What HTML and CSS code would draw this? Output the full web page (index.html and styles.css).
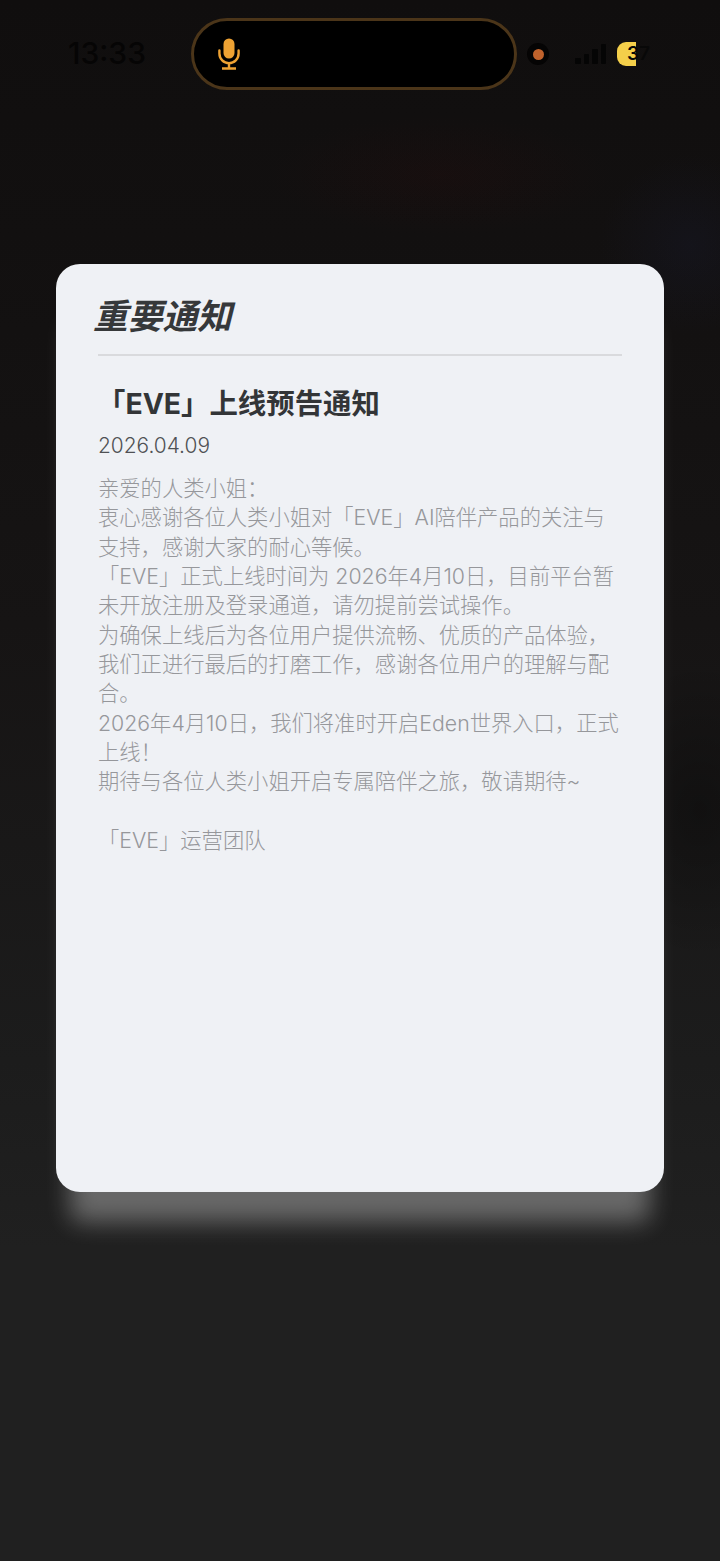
FILE: index.html
```html
<!DOCTYPE html>
<html lang="zh-CN">
<head>
<meta charset="utf-8">
<title>重要通知</title>
<link rel="stylesheet" href="styles.css">
</head>
<body>
<div class="screen">
  <header class="status">
    <span class="time">13:33</span>
    <div class="island">
      <svg class="mic" width="24" height="32" viewBox="0 0 24 32" fill="none">
        <rect x="6.5" y="0.5" width="11" height="20" rx="5.5" fill="#eea233"/>
        <path d="M2.4 12.5v3a9.6 9.6 0 0 0 19.2 0v-3" stroke="#eea233" stroke-width="2.4" stroke-linecap="round"/>
        <path d="M12 25v5M5 30.5h14" stroke="#eea233" stroke-width="2.4"/>
      </svg>
    </div>
    <span class="record"><i></i></span>
    <div class="signal"><i></i><i></i><i></i><i></i></div>
    <div class="battery"><b class="fill"></b><span class="level">37</span></div>
  </header>
  <main class="card">
    <h1 class="heading">重要通知</h1>
    <h2 class="title">「EVE」上线预告通知</h2>
    <p class="date">2026.04.09</p>
    <div class="body">
      <p>亲爱的人类小姐：</p>
      <p>衷心感谢各位人类小姐对「EVE」AI陪伴产品的关注与支持，感谢大家的耐心等候。</p>
      <p>「EVE」正式上线时间为 2026年4月10日，目前平台暂未开放注册及登录通道，请勿提前尝试操作。</p>
      <p>为确保上线后为各位用户提供流畅、优质的产品体验，我们正进行最后的打磨工作，感谢各位用户的理解与配合。</p>
      <p>2026年4月10日，我们将准时开启Eden世界入口，正式上线！</p>
      <p>期待与各位人类小姐开启专属陪伴之旅，敬请期待~</p>
      <p class="sign">「EVE」运营团队</p>
    </div>
  </main>
</div>
</body>
</html>
```
FILE: styles.css
```css
* { box-sizing: border-box; }
html, body { margin: 0; padding: 0; }
body { background: #1f1f1f; font-family: Inter, "Noto Sans CJK SC", sans-serif; }
.screen {
  width: 720px;
  height: 1561px;
  overflow: hidden;
  background:
    radial-gradient(ellipse 110px 150px at 700px 810px, rgba(0, 0, 0, 0.3), transparent),
    radial-gradient(ellipse 170px 60px at 440px 175px, rgba(50, 12, 12, 0.18), transparent),
    radial-gradient(ellipse 90px 90px at 690px 245px, rgba(25, 28, 50, 0.3), transparent),
    linear-gradient(180deg, #100e0e 0%, #121010 15%, #161414 40%, #1c1c1c 68%, #202020 80%, #202020 100%);
}
.status {
  height: 264px;
  padding: 18px 0 0 68px;
  display: flex;
  align-items: flex-start;
}
.time {
  width: 123px;
  margin-top: 17px;
  font-size: 30px;
  line-height: 36px;
  font-weight: 500;
  color: #060505;
}
.island {
  width: 326px;
  height: 72px;
  border: 3px solid #4b3519;
  border-radius: 36px;
  background: #000;
  display: flex;
  align-items: center;
  padding-left: 23px;
}
.record {
  width: 22px;
  height: 22px;
  margin: 25px 0 0 10px;
  border-radius: 50%;
  background: #050404;
  display: flex;
  align-items: center;
  justify-content: center;
}
.record i { width: 11px; height: 11px; border-radius: 50%; background: #c0622c; }
.signal {
  width: 33px;
  height: 20px;
  margin: 26px 0 0 26px;
  display: flex;
  align-items: flex-end;
  gap: 3px;
}
.signal i { width: 5.5px; background: #050505; border-radius: 1px; }
.signal i:nth-child(1) { height: 6px; }
.signal i:nth-child(2) { height: 10px; }
.signal i:nth-child(3) { height: 15px; }
.signal i:nth-child(4) { height: 20px; }
.battery {
  position: relative;
  width: 40px;
  height: 24px;
  margin: 24px 0 0 9px;
}
.fill {
  position: absolute;
  left: 0;
  top: 0;
  width: 19px;
  height: 24px;
  background: #f4cf4a;
  border-radius: 9px 0 0 9px;
}
.level {
  position: relative;
  display: block;
  padding-left: 10px;
  font-size: 19px;
  line-height: 24px;
  font-weight: 600;
  color: #080808;
}
.card {
  width: 608px;
  height: 928px;
  margin-left: 56px;
  padding: 30px 42px 0;
  background: #eff1f5;
  border-radius: 24px;
  box-shadow: 0 44px 24px -14px rgba(255, 255, 255, 0.33);
  color: #333537;
}
.heading {
  margin: 0 0 0 -5px;
  height: 60px;
  font-size: 34.7px;
  line-height: 44px;
  font-weight: 700;
  font-style: italic;
  color: #36383a;
}
.title {
  margin: 0;
  padding-top: 28px;
  border-top: 2px solid #d9dadd;
  text-indent: -1px;
  font-size: 28.4px;
  line-height: 40px;
  font-weight: 700;
  color: #333537;
}
.date {
  margin: 7px 0 0;
  font-size: 20.9px;
  line-height: 30px;
  font-weight: 300;
  color: #4f5154;
}
.body {
  margin-top: 13px;
  font-size: 21.3px;
  line-height: 29.33px;
  font-weight: 300;
  color: #96979b;
}
.body p { margin: 0; }
.body .sign { margin-top: 29.33px; }
```
